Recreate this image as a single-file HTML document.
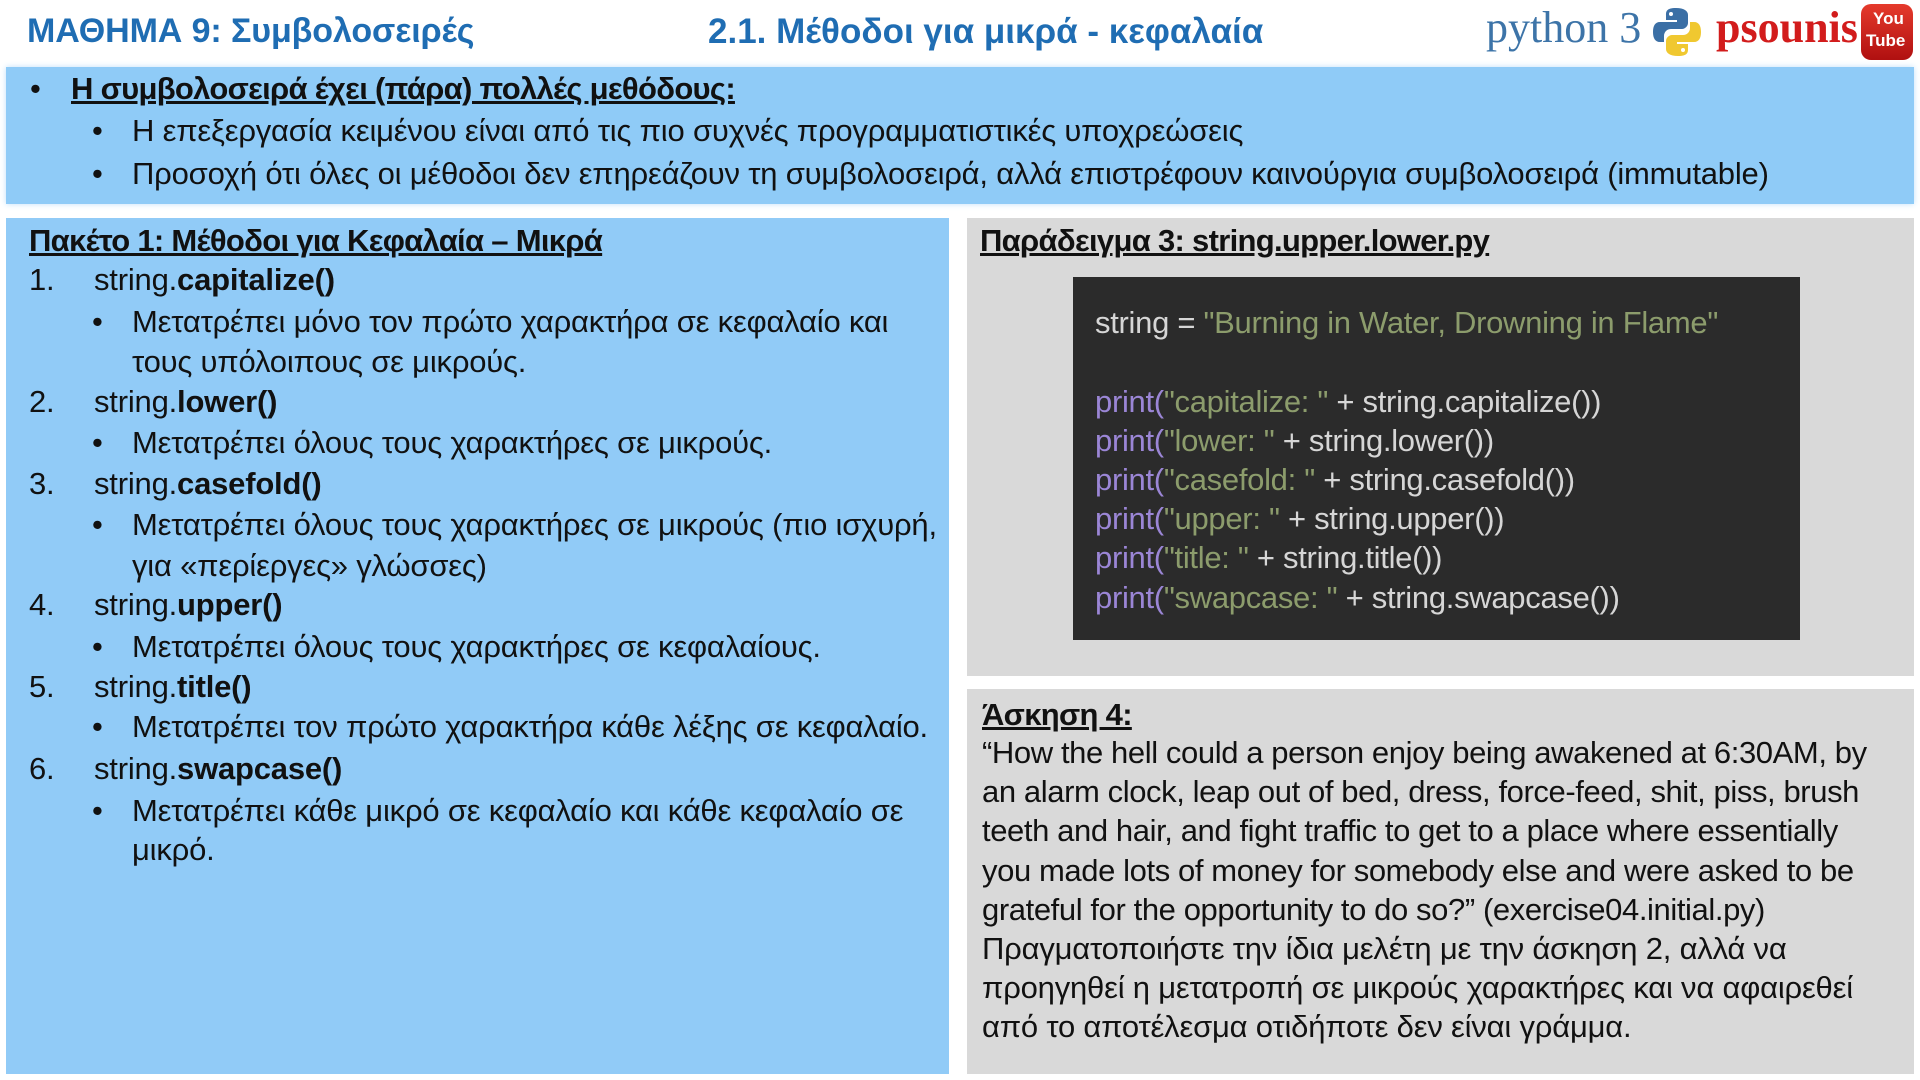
<!DOCTYPE html>
<html><head><meta charset="utf-8">
<style>
body{margin:0;width:1920px;height:1080px;background:#fff;position:relative;overflow:hidden;font-family:"Liberation Sans","DejaVu Sans",sans-serif;color:#111;}
.a{position:absolute;white-space:nowrap;line-height:1;}
.t{font-size:31px;letter-spacing:-0.2px;margin-top:-2px;}
.box{position:absolute;}
.b{font-weight:bold;}
.h{letter-spacing:-0.7px;}
.u{text-decoration:underline;}
.e{letter-spacing:-0.4px;}
.c{font-size:31px;letter-spacing:-0.3px;color:#d6d6d6;margin-top:-2px;}
.p{color:#9b86d6}.s{color:#8c9c6c}
</style></head><body>
<div class="a b" style="left:27px;top:14px;font-size:34px;color:#1f6db3;letter-spacing:-0.1px">ΜΑΘΗΜΑ 9: Συμβολοσειρές</div>
<div class="a b" style="left:708px;top:14px;font-size:35px;color:#1f6db3;letter-spacing:0px">2.1. Μέθοδοι για μικρά - κεφαλαία</div>
<div class="a" style="left:1486px;top:6px;font-size:44px;color:#3d74a8;font-family:'Liberation Serif',serif">python 3</div>
<svg class="a" style="left:1652px;top:6px" width="50" height="52" viewBox="0 0 50 52"><path d="M24 2c-10 0-10 4-10 7v5h11v2H8c-5 0-7 4-7 10s2 10 7 10h4v-6c0-4 3-7 7-7h11c3 0 6-3 6-6V9c0-4-4-7-12-7z" fill="#3b6fa5"/><circle cx="19" cy="8" r="2" fill="#fff"/><path d="M26 50c10 0 10-4 10-7v-5H25v-2h17c5 0 7-4 7-10s-2-10-7-10h-4v6c0 4-3 7-7 7H20c-3 0-6 3-6 6v8c0 4 4 7 12 7z" fill="#f0c830"/><circle cx="31" cy="44" r="2" fill="#fff"/></svg>
<div class="a b" style="left:1716px;top:6px;font-size:44px;color:#d21c1c;font-family:'Liberation Serif',serif">psounis</div>
<div class="box" style="left:1861px;top:4px;width:52px;height:56px;background:linear-gradient(#e53a2c,#b01010);border-radius:10px"></div>
<div class="a b" style="left:1873px;top:10px;font-size:17px;color:#fff">You</div>
<div class="a b" style="left:1866px;top:32px;font-size:17px;color:#fff">Tube</div>

<div class="box" style="left:6px;top:67px;width:1908px;height:137px;background:#8fcbf7;box-shadow:0 0 6px #bfe0fa"></div>
<div class="a t" style="left:30px;top:75px">•</div>
<div class="a t b u h" style="left:71px;top:75px">Η συμβολοσειρά έχει (πάρα) πολλές μεθόδους:</div>
<div class="a t" style="left:92px;top:117px">•</div>
<div class="a t" style="left:132px;top:117px">Η επεξεργασία κειμένου είναι από τις πιο συχνές προγραμματιστικές υποχρεώσεις</div>
<div class="a t" style="left:92px;top:160px">•</div>
<div class="a t" style="left:132px;top:160px">Προσοχή ότι όλες οι μέθοδοι δεν επηρεάζουν τη συμβολοσειρά, αλλά επιστρέφουν καινούργια συμβολοσειρά (immutable)</div>

<div class="box" style="left:6px;top:218px;width:943px;height:856px;background:#91cbf7"></div>
<div class="box" style="left:967px;top:218px;width:947px;height:458px;background:#d9d9d9"></div>
<div class="box" style="left:967px;top:689px;width:947px;height:385px;background:#d9d9d9"></div>
<div class="box" style="left:1073px;top:277px;width:727px;height:363px;background:#2b2b2b"></div>

<div class="a t b u h" style="left:29px;top:227px">Πακέτο 1: Μέθοδοι για Κεφαλαία – Μικρά</div>
<div class="a t" style="left:29px;top:266px">1.</div><div class="a t" style="left:94px;top:266px">string.<b>capitalize()</b></div>
<div class="a t" style="left:92px;top:308px">•</div><div class="a t" style="left:132px;top:308px">Μετατρέπει μόνο τον πρώτο χαρακτήρα σε κεφαλαίο και</div>
<div class="a t" style="left:132px;top:348px">τους υπόλοιπους σε μικρούς.</div>
<div class="a t" style="left:29px;top:388px">2.</div><div class="a t" style="left:94px;top:388px">string.<b>lower()</b></div>
<div class="a t" style="left:92px;top:429px">•</div><div class="a t" style="left:132px;top:429px">Μετατρέπει όλους τους χαρακτήρες σε μικρούς.</div>
<div class="a t" style="left:29px;top:470px">3.</div><div class="a t" style="left:94px;top:470px">string.<b>casefold()</b></div>
<div class="a t" style="left:92px;top:511px">•</div><div class="a t" style="left:132px;top:511px">Μετατρέπει όλους τους χαρακτήρες σε μικρούς (πιο ισχυρή,</div>
<div class="a t" style="left:132px;top:552px">για «περίεργες» γλώσσες)</div>
<div class="a t" style="left:29px;top:591px">4.</div><div class="a t" style="left:94px;top:591px">string.<b>upper()</b></div>
<div class="a t" style="left:92px;top:633px">•</div><div class="a t" style="left:132px;top:633px">Μετατρέπει όλους τους χαρακτήρες σε κεφαλαίους.</div>
<div class="a t" style="left:29px;top:673px">5.</div><div class="a t" style="left:94px;top:673px">string.<b>title()</b></div>
<div class="a t" style="left:92px;top:713px">•</div><div class="a t" style="left:132px;top:713px">Μετατρέπει τον πρώτο χαρακτήρα κάθε λέξης σε κεφαλαίο.</div>
<div class="a t" style="left:29px;top:755px">6.</div><div class="a t" style="left:94px;top:755px">string.<b>swapcase()</b></div>
<div class="a t" style="left:92px;top:797px">•</div><div class="a t" style="left:132px;top:797px">Μετατρέπει κάθε μικρό σε κεφαλαίο και κάθε κεφαλαίο σε</div>
<div class="a t" style="left:132px;top:836px">μικρό.</div>

<div class="a t b u h" style="left:980px;top:227px">Παράδειγμα 3: string.upper.lower.py</div>
<div class="a c" style="left:1095px;top:309px">string = <span class="s">"Burning in Water, Drowning in Flame"</span></div>
<div class="a c" style="left:1095px;top:388px"><span class="p">print(</span><span class="s">"capitalize: "</span> + string.capitalize())</div>
<div class="a c" style="left:1095px;top:427px"><span class="p">print(</span><span class="s">"lower: "</span> + string.lower())</div>
<div class="a c" style="left:1095px;top:466px"><span class="p">print(</span><span class="s">"casefold: "</span> + string.casefold())</div>
<div class="a c" style="left:1095px;top:505px"><span class="p">print(</span><span class="s">"upper: "</span> + string.upper())</div>
<div class="a c" style="left:1095px;top:544px"><span class="p">print(</span><span class="s">"title: "</span> + string.title())</div>
<div class="a c" style="left:1095px;top:584px"><span class="p">print(</span><span class="s">"swapcase: "</span> + string.swapcase())</div>

<div class="a t b u h" style="left:982px;top:701px">Άσκηση 4:</div>
<div class="a t e" style="left:982px;top:739px">“How the hell could a person enjoy being awakened at 6:30AM, by</div>
<div class="a t e" style="left:982px;top:778px">an alarm clock, leap out of bed, dress, force-feed, shit, piss, brush</div>
<div class="a t e" style="left:982px;top:817px">teeth and hair, and fight traffic to get to a place where essentially</div>
<div class="a t e" style="left:982px;top:857px">you made lots of money for somebody else and were asked to be</div>
<div class="a t e" style="left:982px;top:896px">grateful for the opportunity to do so?” (exercise04.initial.py)</div>
<div class="a t" style="left:982px;top:935px">Πραγματοποιήστε την ίδια μελέτη με την άσκηση 2, αλλά να</div>
<div class="a t" style="left:982px;top:974px">προηγηθεί η μετατροπή σε μικρούς χαρακτήρες και να αφαιρεθεί</div>
<div class="a t" style="left:982px;top:1013px">από το αποτέλεσμα οτιδήποτε δεν είναι γράμμα.</div>
</body></html>
